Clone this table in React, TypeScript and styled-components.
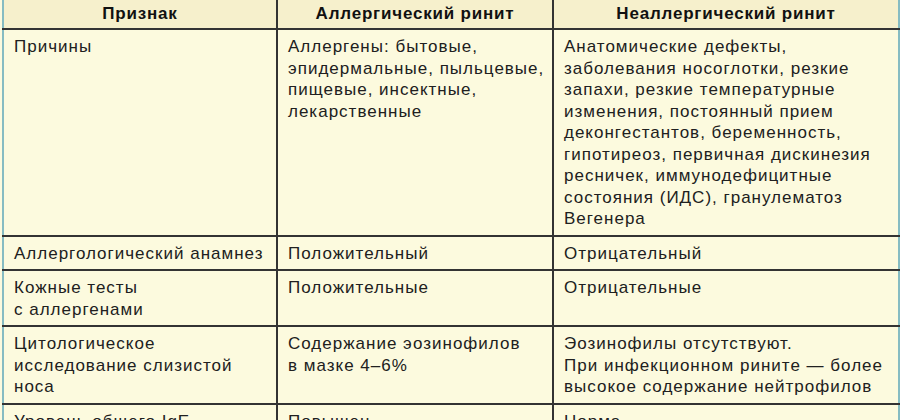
import styled, { createGlobalStyle } from 'styled-components';

const GlobalStyle = createGlobalStyle`
  html, body {
    margin: 0;
    padding: 0;
    background: #fcfade;
  }
  body {
    width: 900px;
    height: 420px;
    overflow: hidden;
  }
`;

const Page = styled.div`
  padding-left: 2px;
  width: 896px;
`;

const Table = styled.table`
  width: 896px;
  table-layout: fixed;
  border-collapse: collapse;
  font-family: 'Liberation Sans', Arial, sans-serif;
  color: #202020;
  border-left: 2px solid #86bcc2;
  border-right: 2px solid #86bcc2;
`;

const HeadCell = styled.th`
  background: #f6f0cc;
  height: 28px;
  padding: 0 6px;
  font-size: 17px;
  font-weight: bold;
  letter-spacing: 0.8px;
  text-align: center;
  vertical-align: middle;
  border-bottom: 2px solid #333;
  border-left: 2px solid #333;
  color: #111;
  white-space: nowrap;

  &:first-child {
    border-left: none;
  }
`;

const Cell = styled.td`
  padding: 6px 8px 5px 10px;
  font-size: 17px;
  line-height: 21.5px;
  letter-spacing: 1px;
  vertical-align: top;
  border-top: 2px solid #333;
  border-left: 2px solid #333;
  white-space: nowrap;

  &:first-child {
    border-left: none;
  }
`;

const Line = styled.div``;

type Row = { sign: string[]; allergic: string[]; nonAllergic: string[] };

const rows: Row[] = [
  {
    sign: ['Причины'],
    allergic: ['Аллергены: бытовые,', 'эпидермальные, пыльцевые,', 'пищевые, инсектные,', 'лекарственные'],
    nonAllergic: [
      'Анатомические дефекты,',
      'заболевания носоглотки, резкие',
      'запахи, резкие температурные',
      'изменения, постоянный прием',
      'деконгестантов, беременность,',
      'гипотиреоз, первичная дискинезия',
      'ресничек, иммунодефицитные',
      'состояния (ИДС), гранулематоз',
      'Вегенера',
    ],
  },
  {
    sign: ['Аллергологический анамнез'],
    allergic: ['Положительный'],
    nonAllergic: ['Отрицательный'],
  },
  {
    sign: ['Кожные тесты', 'с аллергенами'],
    allergic: ['Положительные'],
    nonAllergic: ['Отрицательные'],
  },
  {
    sign: ['Цитологическое', 'исследование слизистой', 'носа'],
    allergic: ['Содержание эозинофилов', 'в мазке 4–6%'],
    nonAllergic: [
      'Эозинофилы отсутствуют.',
      'При инфекционном рините — более',
      'высокое содержание нейтрофилов',
    ],
  },
  {
    sign: ['Уровень общего IgE'],
    allergic: ['Повышен'],
    nonAllergic: ['Норма'],
  },
];

function Lines({ items }: { items: string[] }) {
  return (
    <>
      {items.map((t, i) => (
        <Line key={i}>{t}</Line>
      ))}
    </>
  );
}

export default function App() {
  return (
    <>
      <GlobalStyle />
      <Page>
        <Table>
          <colgroup>
            <col style={{ width: 274 }} />
            <col style={{ width: 276 }} />
            <col style={{ width: 346 }} />
          </colgroup>
          <thead>
            <tr>
              <HeadCell>Признак</HeadCell>
              <HeadCell>Аллергический ринит</HeadCell>
              <HeadCell>Неаллергический ринит</HeadCell>
            </tr>
          </thead>
          <tbody>
            {rows.map((r, i) => (
              <tr key={i}>
                <Cell>
                  <Lines items={r.sign} />
                </Cell>
                <Cell>
                  <Lines items={r.allergic} />
                </Cell>
                <Cell>
                  <Lines items={r.nonAllergic} />
                </Cell>
              </tr>
            ))}
          </tbody>
        </Table>
      </Page>
    </>
  );
}
